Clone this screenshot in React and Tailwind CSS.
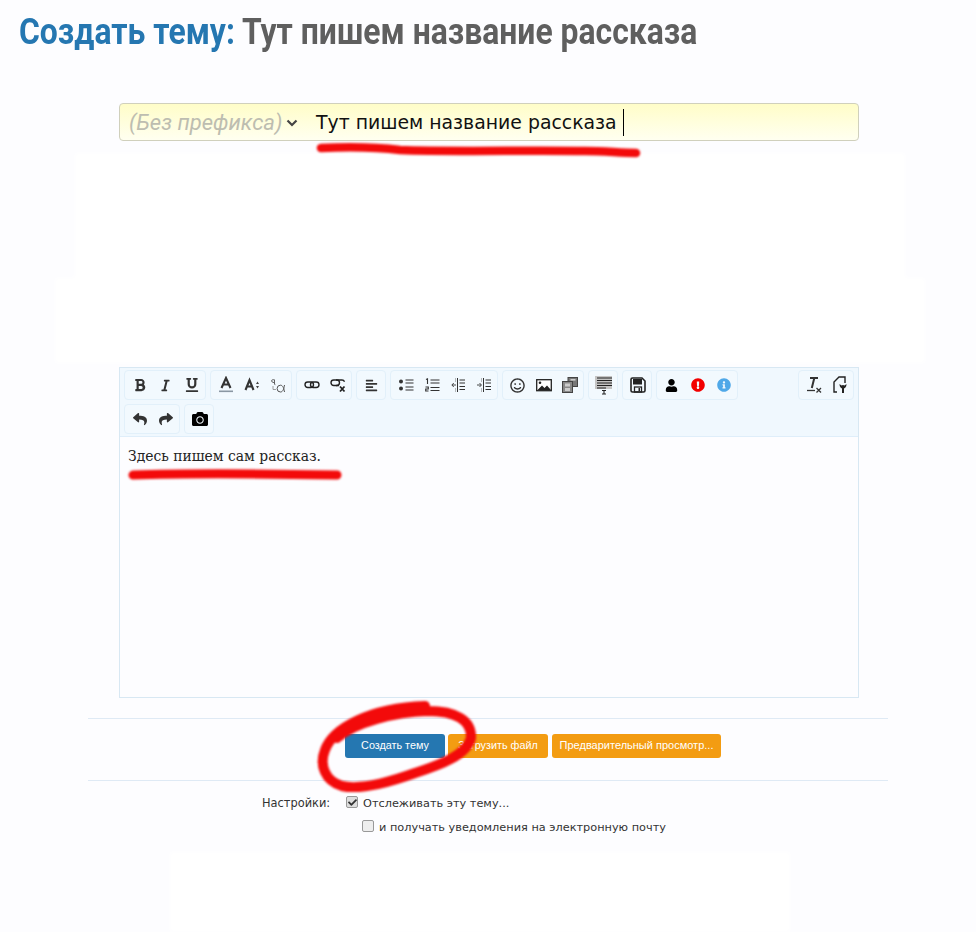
import React from "react";
import { FaBold, FaItalic, FaUnderline, FaAlignLeft, FaRegSmile, FaUser, FaExclamationCircle, FaInfoCircle, FaReply, FaShare, FaCamera, FaCheck } from "react-icons/fa";

const S = ({ children, w = 16, h = 16, vb = "0 0 16 16" }) => (
  <svg width={w} height={h} viewBox={vb} fill="none">{children}</svg>
);

const FontColor = () => (
  <S w={18} h={18} vb="0 0 18 18"><path d="M4.500 12 9 2l4.500 10M6.200 8.500h5.600" stroke="#333" strokeWidth="2.100" /><rect x="2" y="14.500" width="14" height="1.600" fill="#8a97a3" /></S>
);
const FontSize = () => (
  <S><path d="M1.500 13 5.500 3l4 10M3 9.500h5" stroke="#333" strokeWidth="2.100" /><path d="M12 7h3l-1.500-2.500zM12 9h3l-1.500 2.500z" fill="#444" /></S>
);
const Case = () => (
  <S>
    <path d="M4.500 3.200c-.4-.8-3-.8-3 .8 0 1.600 3 1 3 2.400M4.500 2.600v4.400c0 .6.300.7.800.7" stroke="#555" strokeWidth="0.900" />
    <path d="M3 9v3.500h3" stroke="#888" strokeWidth="0.800" />
    <path d="M14.500 8c-.5 3.500-1.500 7-4 7a3.400 3.400 0 1 1 0-6.800c2.500 0 3.500 3.500 4 6.800" stroke="#555" strokeWidth="1" />
  </S>
);
const Chain = () => (
  <S>
    <rect x="1" y="5" width="8.500" height="5.500" rx="2.750" stroke="#222" strokeWidth="1.400" />
    <rect x="6.500" y="5" width="8.500" height="5.500" rx="2.750" stroke="#222" strokeWidth="1.400" />
  </S>
);
const Unlink = () => (
  <S>
    <rect x="1" y="3" width="8.500" height="5.500" rx="2.750" stroke="#222" strokeWidth="1.400" />
    <path d="M6 3h6a2.700 2.700 0 0 1 2.500 1.800M6 8.500h3" stroke="#222" strokeWidth="1.400" />
    <path d="m10 9.500 4.500 5M14.500 9.500l-4.500 5" stroke="#222" strokeWidth="1.800" />
  </S>
);
const UList = () => (
  <S>
    <circle cx="3" cy="4.500" r="2" fill="#333" />
    <circle cx="3" cy="11.500" r="2" fill="#333" />
    <path d="M7.500 3h8M7.500 6h8M7.500 10h8M7.500 13h8" stroke="#333" strokeWidth="1.100" />
  </S>
);
const OList = () => (
  <S>
    <path d="M2 2.500 3.500 1.800V7" stroke="#333" strokeWidth="1.100" />
    <path d="M1.500 10h2.800v2H1.700v2h2.800" stroke="#333" strokeWidth="1.100" />
    <path d="M6.500 3h9M6.500 6h9M6.500 10.500h9M6.500 13.500h9" stroke="#333" strokeWidth="1.100" />
  </S>
);
const Outdent = ({ flip }) => (
  <S>
    <path d="M7.500 1v14" stroke="#333" strokeWidth="1" />
    <path d="M9.500 3H15M9.500 6H15M9.500 9.500H15M9.500 12.500H15" stroke="#333" strokeWidth="1" />
    {flip ? (
      <path d="M1 8h4M3.500 6l2 2-2 2" stroke="#333" strokeWidth="0.900" />
    ) : (
      <path d="M6 8H2M3.800 6l-2 2 2 2" stroke="#333" strokeWidth="0.900" />
    )}
    <path d="M5 2h1M5 4h1M5 12h1M5 14h1" stroke="#555" strokeWidth="0.800" />
  </S>
);
const ImageIcon = () => (
  <S>
    <rect x="0.700" y="2.700" width="14.600" height="11" stroke="#222" strokeWidth="1.300" fill="#fff" />
    <circle cx="4" cy="5.800" r="1.300" fill="#222" />
    <path d="M1.500 13 6 8.500l2.500 2.500 2.500-2.500 4 4.500z" fill="#222" />
  </S>
);
const Media = () => (
  <S>
    <rect x="6" y="0.500" width="9.500" height="9" fill="#777" stroke="#444" />
    <rect x="0.500" y="4.500" width="10" height="11" fill="#888" stroke="#444" />
    <rect x="3" y="6.500" width="5" height="3" fill="#ccc" />
    <rect x="3" y="11" width="5" height="3" fill="#ccc" />
    <rect x="8.500" y="2" width="5" height="1.600" fill="#ccc" />
  </S>
);
const Draft = () => (
  <S w={20} h={20} vb="0 0 20 20">
    <rect x="1" y="1" width="17" height="13" fill="#c4c4c4" />
    <path d="M3 3h15M3 5.500h15M3 8h15M3 10.500h15M3 13h9" stroke="#222" strokeWidth="1.100" />
    <path d="M8 15.500h4M8 19h4M10 15.500V19" stroke="#222" strokeWidth="1.100" />
  </S>
);
const Save = () => (
  <S>
    <path d="M2.500 1h9.500l3 3v9.500a1.500 1.500 0 0 1-1.500 1.500h-11A1.500 1.500 0 0 1 1 13.500v-11A1.500 1.500 0 0 1 2.500 1z" stroke="#222" strokeWidth="1.600" />
    <rect x="3" y="2" width="9" height="5.500" fill="#222" />
    <rect x="4.500" y="10" width="7" height="5" stroke="#222" strokeWidth="1.300" />
    <rect x="8.500" y="11" width="1.500" height="3" fill="#222" />
  </S>
);
const ClearFmt = () => (
  <S w={18} h={18} vb="0 0 18 18">
    <path d="M5 2h8M9.300 2 6.800 12" stroke="#333" strokeWidth="2" />
    <path d="M2 14.500h8" stroke="#333" strokeWidth="1.300" />
    <path d="m11.500 12 4.500 4.500M16 12l-4.500 4.500" stroke="#333" strokeWidth="1.300" />
  </S>
);
const Source = () => (
  <S w={18} h={18} vb="0 0 18 18">
    <path d="M6 16H3V6l5-5h6v6" stroke="#222" strokeWidth="1.400" />
    <path d="M8.500 8c0 3 1.500 4 2.500 4.500V17h2v-4.500c1-.5 2.500-1.500 2.500-4.500l-2 1.500-1.500-.5-1.500.5z" fill="#222" />
  </S>
);

const b = (icon) => (
  <span className="flex h-[26px] w-[26px] items-center justify-center pl-px text-[#333]">{icon}</span>
);

const Group = ({ items, className = "" }) => (
  <div className={`flex rounded-[4px] border border-[#e2f0fa] bg-[#f2f9fe] p-px ${className}`}>
    {items.map((it, i) => (
      <React.Fragment key={i}>{b(it)}</React.Fragment>
    ))}
  </div>
);

export default function App() {
  return (
    <div className="relative h-[932px] w-[976px] overflow-hidden bg-[#fdfdff]" style={{ fontFamily: '"Liberation Sans", sans-serif' }}>
      <div className="pl-[19px] pt-[13px]">
        <h1 className="h-[38px] origin-left scale-x-[0.886] whitespace-nowrap font-['Roboto',sans-serif] text-[36px] font-bold leading-[38px] text-[#5f5f5f]">
          <span className="text-[#2577b1]">Создать тему:</span> Тут пишем название рассказа
        </h1>
      </div>

      <div className="ml-[119px] mt-[52px] flex h-[38px] w-[740px] items-center rounded-[4px] border border-[#d0d0bc] bg-gradient-to-b from-[#fffdc8] to-[#fffff0] pl-[9px]">
        <span className="w-[157px] whitespace-nowrap font-['Roboto',sans-serif] text-[22px] italic text-[#bdbdb0]">(Без префикса)</span>
        <svg width="12" height="8" viewBox="0 0 12 8" className="mt-px">
          <path d="M1.500 1.500 6 6l4.500-4.500" stroke="#444" strokeWidth="2.200" fill="none" />
        </svg>
        <span className="ml-[18px] mt-[2px] whitespace-nowrap font-['DejaVu_Sans',sans-serif] text-[18.850px] leading-none text-[#111]">Тут пишем название рассказа</span>
        <span className="ml-[6px] h-[27px] w-px bg-black" />
      </div>

      <div className="mt-[12px] h-[210px] w-[976px] blur-[2px]">
        <div className="ml-[75px] h-[125px] w-[830px] bg-white" />
        <div className="ml-[55px] h-[85px] w-[870px] bg-white" />
      </div>

      <div className="ml-[119px] mt-[4px] h-[331px] w-[740px] border border-[#d8e8f3] bg-[#fdfdff]">
        <div className="flex h-[69px] flex-col gap-1 border-b border-[#dfeefa] bg-[#f0f8fe] px-1 pt-[2px]">
          <div className="flex gap-1">
            <Group items={[<FaBold size={14} />, <FaItalic size={13} />, <FaUnderline size={14} />]} />
            <Group items={[<FontColor />, <FontSize />, <Case />]} />
            <Group items={[<Chain />, <Unlink />]} />
            <Group items={[<FaAlignLeft size={13} />]} />
            <Group items={[<UList />, <OList />, <Outdent />, <Outdent flip />]} />
            <Group items={[<FaRegSmile size={15} />, <ImageIcon />, <Media />]} />
            <Group items={[<Draft />]} />
            <Group items={[<Save />]} />
            <Group items={[<FaUser size={13} color="#000" />, <FaExclamationCircle size={14} color="#f20000" />, <FaInfoCircle size={14} color="#4fa8e8" />]} />
            <Group className="ml-auto" items={[<ClearFmt />, <Source />]} />
          </div>
          <div className="flex gap-1">
            <Group items={[<FaReply size={14} />, <FaShare size={14} />]} />
            <Group items={[<FaCamera size={16} color="#000" />]} />
          </div>
        </div>
        <p className="pl-2 pt-[9px] font-['DejaVu_Serif',serif] text-[13.900px] leading-5 text-[#222]">Здесь пишем сам рассказ.</p>
      </div>

      <div className="ml-[88px] mt-[20px] h-[63px] w-[800px] border-y border-[#dfeaf5] pl-[257px] pt-[15px]">
        <div className="flex gap-[3px]">
          <button className="h-[24px] w-[100px] rounded-[3px] bg-[#2577b1] pb-[2px] text-[10.800px] text-white">Создать тему</button>
          <button className="h-[24px] w-[100px] rounded-[3px] bg-[#f39c12] pb-[2px] text-[10.800px] text-white">Загрузить файл</button>
          <button className="ml-px h-[24px] w-[169px] rounded-[3px] bg-[#f39c12] pb-[2px] text-[11px] text-white">Предварительный просмотр...</button>
        </div>
      </div>

      <div className="ml-[262px] mt-[14px] flex text-[11.300px] text-[#333]" style={{ fontFamily: '"DejaVu Sans", sans-serif' }}>
        <span className="w-[84px] text-[11.400px]">Настройки:</span>
        <div className="mt-px flex flex-col gap-[7px]">
          <label className="flex items-center gap-[5px]">
            <span className="flex h-3 w-3 -translate-y-[2px] items-center justify-center rounded-[2px] border border-[#999] bg-[#ddd]"><FaCheck size={9} color="#333" /></span>
            Отслеживать эту тему...
          </label>
          <label className="ml-[16px] flex items-center gap-[5px]">
            <span className="h-3 w-3 -translate-y-[2px] rounded-[2px] border border-[#999] bg-[#eee]" />
            и получать уведомления на электронную почту
          </label>
        </div>
      </div>

      <div className="absolute bottom-0 left-[170px] h-[80px] w-[620px] bg-white blur-[2px]" />

      <svg className="pointer-events-none absolute left-0 top-0" width="976" height="932" fill="none">
        <g stroke="#f30a0a" strokeLinecap="round" strokeLinejoin="round" style={{ filter: "blur(1px)" }}>
          <path d="M321 148C345 147 375 147 400 150C450 152 530 150 585 151C605 151 620 153 636 153" strokeWidth="8.500" />
          <path d="M133 475C190 473 280 474 337 475" strokeWidth="9" />
          <path d="M337 738C355 722 395 712 428 711C455 711 472 720 471 738C467 755 440 765 415 773C390 782 360 790 342 786C325 781 319 765 325 750C333 728 370 708 425 706" strokeWidth="10" />
        </g>
      </svg>
    </div>
  );
}
